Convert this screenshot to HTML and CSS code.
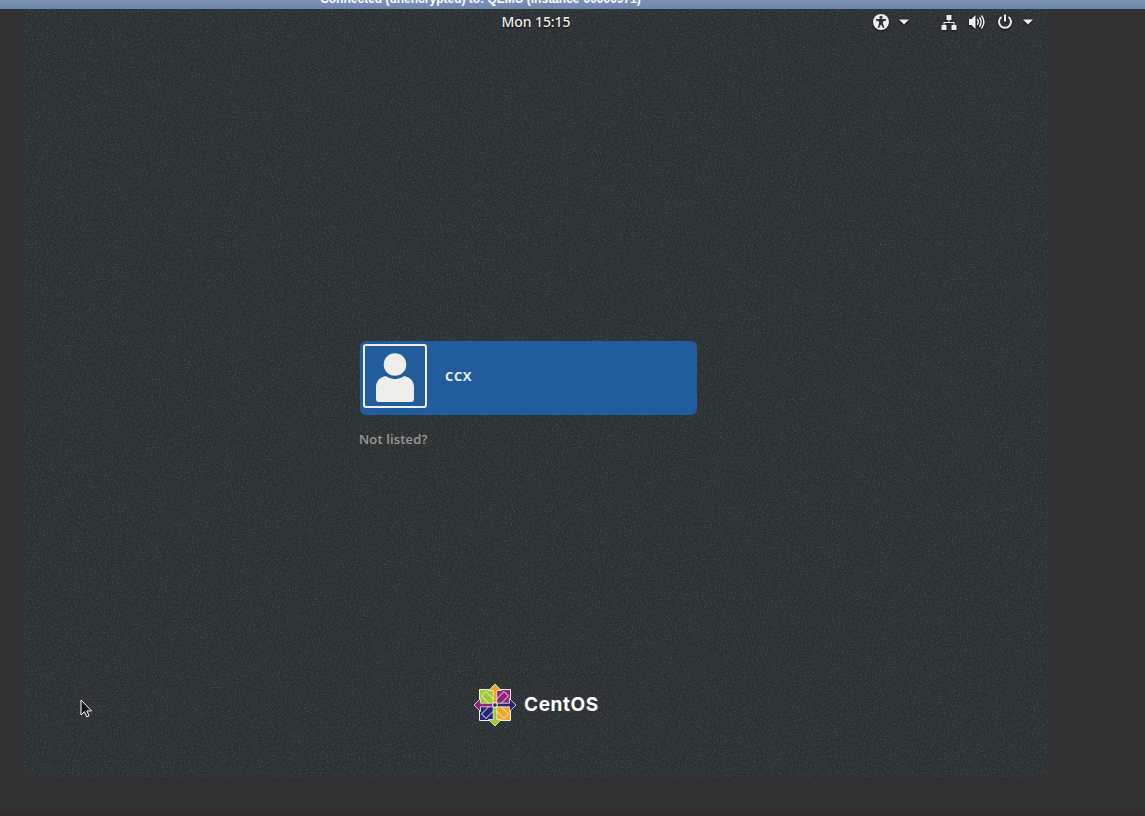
FILE: index.html
```html
<!DOCTYPE html>
<html lang="en">
<head>
  <meta charset="UTF-8">
  <meta name="viewport" content="width=device-width, initial-scale=1.0">
  <title>QEMU</title>
  <link rel="stylesheet" href="styles.css">
</head>
<body>
  <header class="vnc-bar">Connected (unencrypted) to: QEMU (instance-00000971)</header>

  <main class="desktop">
    <svg class="grain" width="1024" height="768">
      <filter id="noise" x="0" y="0" width="100%" height="100%">
        <feTurbulence type="fractalNoise" baseFrequency="0.6" numOctaves="2" seed="4" />
        <feColorMatrix values="0 0 0 0 0.5  0 0 0 0 0.58  0 0 0 0 0.59  0.35 0 0 0 -0.16" />
      </filter>
      <rect width="1024" height="768" filter="url(#noise)" />
    </svg>

    <nav class="panel">
      <span class="clock">Mon 15:15</span>
      <div class="status">
        <svg class="icon access" width="16" height="16" viewBox="0 0 16 16">
          <circle cx="8" cy="8" r="8" fill="#eeeeec" />
          <g fill="#2e3436">
            <circle cx="8" cy="3.3" r="1.6" />
            <path d="M3 5.1h10v1.5l-3 .8v2l1.3 4-1.4.5L8.3 10.8h-.6l-1.6 3.1-1.4-.5 1.3-4v-2l-3-.8z" />
          </g>
        </svg>
        <svg class="icon arrow-a" width="10" height="6" viewBox="0 0 10 6"><path d="M0 .5h10L5 5.5z" fill="#eeeeec" /></svg>
        <svg class="icon network" width="16" height="16" viewBox="0 0 16 16" fill="#eeeeec">
          <path d="M5.5 1h5v5h-5zM.5 11h5v5h-5zM10.5 11h5v5h-5zM7.5 6h1v2h5v3h-1V9h-9v2h-1V8h5z" />
        </svg>
        <svg class="icon volume" width="16" height="16" viewBox="0 0 16 16" fill="none" stroke="#eeeeec">
          <path d="M0 5h2.5L6 1.5h.5v13H6L2.5 11H0z" fill="#eeeeec" stroke="none" />
          <path d="M8.3 5.2q2 2.8 0 5.6M10.4 3.3q3.4 4.7 0 9.4M12.4 1.5q5 6.5 0 13" stroke-width="1.5" />
        </svg>
        <svg class="icon power" width="16" height="16" viewBox="0 0 16 16" fill="none" stroke="#eeeeec" stroke-width="2">
          <path d="M4.5 3a6 6 0 1 0 7 0" />
          <path d="M8 .5v7" />
        </svg>
        <svg class="icon arrow-b" width="10" height="6" viewBox="0 0 10 6"><path d="M0 .5h10L5 5.5z" fill="#eeeeec" /></svg>
      </div>
    </nav>

    <section class="login">
      <div class="user">
        <div class="avatar">
          <svg width="60" height="60" viewBox="0 0 60 60" fill="#eeeeec">
            <circle cx="30" cy="18.5" r="11.3" />
            <path d="M11 41C11 35 15 31.5 20.5 30q9.5 6.5 19 0C45 31.5 49 35 49 41V53Q49 56 46 56H14Q11 56 11 53z" />
          </svg>
        </div>
        <span class="name">CCX</span>
      </div>
      <div class="not-listed">Not listed?</div>
    </section>

    <footer class="brand">
      <svg width="44" height="44" viewBox="-22 -22 44 44" stroke="#eeeeec" stroke-width="1">
        <path d="M-15.5-15.5H0V0h-15.5z" fill="#9ccd2a" />
        <path d="M0-15.5h15.5V0H0z" fill="#932279" />
        <path d="M0 0h15.5v15.5H0z" fill="#efa724" />
        <path d="M-15.5 0H0v15.5h-15.5z" fill="#262577" />
        <g stroke-width="0.8">
          <path d="M0-21l6.5 6.5H1.800V-2h-3.600v-12.500H-6.500z" fill="#efa724" />
          <path d="M21 0l-6.500 6.500V1.800H2v-3.600h12.500V-6.500z" fill="#262577" />
          <path d="M0 21l-6.500-6.500h4.700V2h3.600v12.500H6.500z" fill="#9ccd2a" />
          <path d="M-21 0l6.500-6.500v4.700H-2v3.600h-12.500V6.500z" fill="#932279" />
        </g>
        <path d="M-1.500-6L-9-13.500l-4.500 4.500L-6-1.500M1.500-6L9-13.500l4.500 4.500L6-1.500M-1.500 6L-9 13.500l-4.500-4.500L-6 1.500M1.500 6L9 13.500l4.500-4.500L6 1.500" fill="none" />
        <circle r="2.3" fill="#2e3436" />
      </svg>
      <span class="wordmark">CentOS</span>
    </footer>

    <svg class="cursor" width="12" height="20" viewBox="0 0 12 20">
      <path d="M1 1v15l3.5-3.3 2.2 5.2 2.4-1-2.2-5H11.5z" fill="#111" stroke="#fff" stroke-width="1" />
    </svg>
  </main>
</body>
</html>
```
FILE: styles.css
```css
body {
  margin: 0;
  height: 816px;
  box-sizing: border-box;
  overflow: hidden;
  background-color: #313131;
  border-bottom: 3px solid #33292e;
  font-family: "Open Sans", "Noto Sans", sans-serif;
  color: #eeeeec;
}

.vnc-bar {
  display: flex;
  align-items: flex-end;
  justify-content: center;
  height: 9px;
  box-sizing: border-box;
  padding: 0 184px 3px 0;
  background: linear-gradient(#7d93b6, #6c86ab);
  color: #fff;
  font: bold 12px/14px "Liberation Sans", Arial, sans-serif;
  overflow: hidden;
}

.desktop {
  position: relative;
  display: flex;
  flex-direction: column;
  width: 1024px;
  height: 768px;
  margin-left: 24px;
  background-color: #2c3234;
}

.grain {
  position: absolute;
  top: 0;
  left: 0;
}

.panel,
.login,
.brand {
  position: relative;
}

.panel {
  display: grid;
  grid-template-columns: 1fr auto 1fr;
  align-items: center;
  height: 26px;
}

.clock {
  grid-column: 2;
  font: 500 14px/26px "Noto Sans", sans-serif;
  letter-spacing: -0.1px;
  text-shadow: 0 1px 2px #000;
}

.status {
  display: flex;
  align-items: center;
  justify-content: flex-end;
  padding-right: 15px;
}

.icon {
  filter: drop-shadow(0 1px 1px rgba(0, 0, 0, 0.7));
}

.arrow-a {
  margin: 0 32px 0 10px;
}

.network,
.volume {
  margin-right: 12px;
}

.arrow-b {
  margin-left: 10px;
}

.login {
  width: 337px;
  margin: 306px 0 0 336px;
}

.user {
  display: flex;
  align-items: center;
  height: 74px;
  box-sizing: border-box;
  padding: 0 3px 4px;
  border-radius: 6px;
  background-color: #215d9c;
}

.avatar {
  width: 60px;
  height: 60px;
  border: 2px solid #eeeeec;
  border-radius: 3px;
}

.avatar svg {
  display: block;
}

.name {
  margin-left: 18px;
  font-size: 13px;
  font-weight: bold;
  letter-spacing: 0.6px;
}

.not-listed {
  margin: 14px 0 0 -1px;
  color: #999a91;
  font-size: 13px;
  font-weight: 600;
  line-height: 20px;
  letter-spacing: 0.15px;
}

.brand {
  display: flex;
  align-items: center;
  gap: 7px;
  margin: 234px 0 0 449px;
}

.wordmark {
  color: #fff;
  font: bold 19px/24px Inter, sans-serif;
  letter-spacing: 0.6px;
}

.cursor {
  position: absolute;
  left: 56px;
  top: 690px;
}
```
